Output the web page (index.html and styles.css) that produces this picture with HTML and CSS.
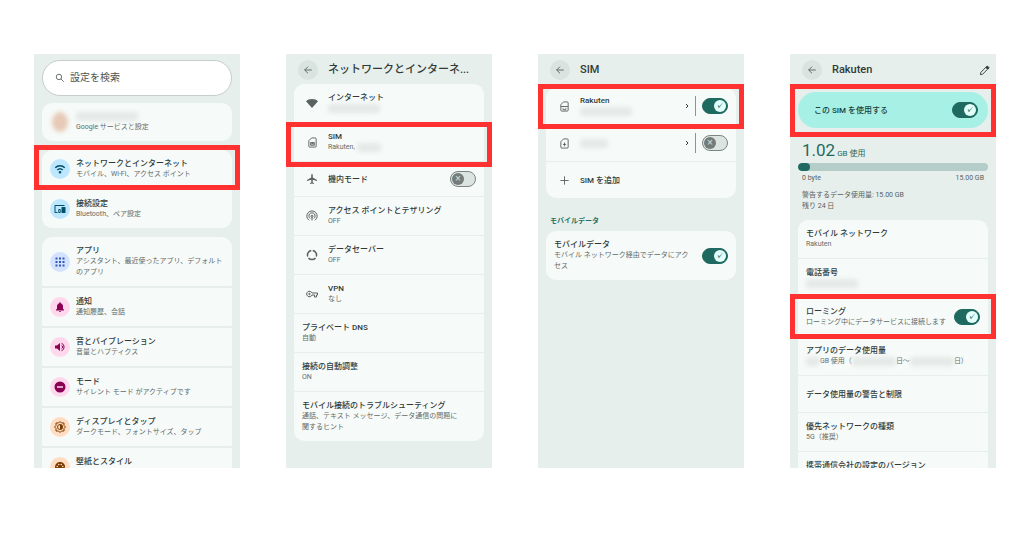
FILE: index.html
```html
<!DOCTYPE html>
<html lang="ja">
<head>
	<meta charset="UTF-8">
	<meta name="viewport" content="width=device-width, initial-scale=1">
	<title>ローミングの設定手順</title>
	<link rel="stylesheet" href="styles.css">
</head>
<body>
	<main class="steps">

		<!-- 設定トップ -->
		<section class="phone">
			<label class="search">
				<svg viewBox="0 0 24 24" class="line"><circle cx="9.500" cy="9.500" r="6.500"/><path d="M14.500 14.500L21 21"/></svg>
				<input type="search" placeholder="設定を検索" aria-label="設定を検索">
			</label>
			<div class="card wide">
				<a class="row" href="#account">
					<span class="icon face"><i></i></span>
					<span class="text"><b><i class="mask name"></i></b><small>Google サービスと設定</small></span>
				</a>
			</div>
			<div class="card wide">
				<a class="row mark" href="#network">
					<span class="icon blue"><svg viewBox="0 0 24 24" class="line bold"><path d="M2.500 9.500a13.500 13.500 0 0 1 19 0M6.500 14a8 8 0 0 1 11 0"/><circle cx="12" cy="18.500" r="1.200"/></svg></span>
					<span class="text"><b>ネットワークとインターネット</b><small>モバイル、Wi-Fi、アクセス ポイント</small></span>
				</a>
				<a class="row" href="#devices">
					<span class="icon blue"><svg viewBox="0 0 24 24"><path d="M3 6h18V4H3c-1.100 0-2 .9-2 2v12c0 1.100.9 2 2 2h4v-2H3V6zm10 6H9v1.780c-.61.550-1 1.330-1 2.220s.39 1.670 1 2.220V20h4v-1.780c.61-.550 1-1.340 1-2.220s-.39-1.670-1-2.220V12zm-2 5.500a1.500 1.500 0 1 1 0-3 1.500 1.500 0 0 1 0 3zM22 8h-6c-.5 0-1 .5-1 1v10c0 .5.5 1 1 1h6c.5 0 1-.5 1-1V9c0-.5-.5-1-1-1z"/></svg></span>
					<span class="text"><b>接続設定</b><small>Bluetooth、ペア設定</small></span>
				</a>
			</div>
			<div class="card wide">
				<a class="row" href="#apps">
					<span class="icon indigo"><svg viewBox="0 0 24 24"><path d="M3 3h4v4H3zM10 3h4v4h-4zM17 3h4v4h-4zM3 10h4v4H3zM10 10h4v4h-4zM17 10h4v4h-4zM3 17h4v4H3zM10 17h4v4h-4zM17 17h4v4h-4z"/></svg></span>
					<span class="text"><b>アプリ</b><small>アシスタント、最近使ったアプリ、デフォルトのアプリ</small></span>
				</a>
				<a class="row" href="#notice">
					<span class="icon pink"><svg viewBox="0 0 24 24"><path d="M12 22a2 2 0 0 0 2-2h-4a2 2 0 0 0 2 2zm6-6v-5c0-3.070-1.640-5.640-4.500-6.320V4a1.500 1.500 0 0 0-3 0v.68C7.630 5.360 6 7.920 6 11v5l-2 1v2h16v-2z"/></svg></span>
					<span class="text"><b>通知</b><small>通知履歴、会話</small></span>
				</a>
				<a class="row" href="#sound">
					<span class="icon pink"><svg viewBox="0 0 24 24"><path d="M2 9v6h4l6 5V4L6 9z"/><path class="wave" d="M15 8.500a4 4 0 0 1 0 7M15 4.500a8 8 0 0 1 0 15"/></svg></span>
					<span class="text"><b>音とバイブレーション</b><small>音量とハプティクス</small></span>
				</a>
				<a class="row" href="#mode">
					<span class="icon pink"><svg viewBox="0 0 24 24"><path fill-rule="evenodd" d="M12 1a11 11 0 1 0 0 22 11 11 0 0 0 0-22zM6 10.500h12v3H6z"/></svg></span>
					<span class="text"><b>モード</b><small>サイレント モード がアクティブです</small></span>
				</a>
				<a class="row" href="#display">
					<span class="icon orange"><svg viewBox="0 0 24 24"><path class="wave" d="M9 4l3-3 3 3h5v5l3 3-3 3v5h-5l-3 3-3-3H4v-5l-3-3 3-3V4z"/><path d="M12 6a6 6 0 0 1 0 12z"/><path class="wave" d="M12 7a5 5 0 0 0 0 10"/></svg></span>
					<span class="text"><b>ディスプレイとタップ</b><small>ダークモード、フォントサイズ、タップ</small></span>
				</a>
				<a class="row" href="#style">
					<span class="icon orange"><svg viewBox="0 0 24 24"><path fill-rule="evenodd" d="M12 2a10 10 0 1 0 0 20c2 0 2-2 1.300-3-.8-1.200 0-3 1.700-3h2a5 5 0 0 0 5-5c0-5-4.500-9-10-9zM6.500 9.500a1.600 1.600 0 1 1 0 3.200 1.600 1.600 0 0 1 0-3.200zm3-4a1.600 1.600 0 1 1 0 3.200 1.600 1.600 0 0 1 0-3.200zm5 0a1.600 1.600 0 1 1 0 3.200 1.600 1.600 0 0 1 0-3.200zm3 4a1.600 1.600 0 1 1 0 3.200 1.600 1.600 0 0 1 0-3.200z"/></svg></span>
					<span class="text"><b>壁紙とスタイル</b><small></small></span>
				</a>
			</div>
		</section>

		<!-- ネットワークとインターネット -->
		<section class="phone">
			<header class="bar">
				<button type="button" class="back" aria-label="戻る"><svg viewBox="0 0 24 24" class="line"><path d="M21 12H4M12 4l-8 8 8 8"/></svg></button>
				<h2>ネットワークとインターネ...</h2>
			</header>
			<div class="card">
				<a class="row" href="#wifi">
					<span class="icon"><svg viewBox="0 0 24 24"><path d="M12 22L0 8.500C3 5.500 7.500 4 12 4s9 1.500 12 4.500z"/></svg></span>
					<span class="text"><b>インターネット</b><small><i class="mask ssid"></i></small></span>
				</a>
				<a class="row mark low" href="#sim">
					<span class="icon"><svg viewBox="0 0 24 24" class="line"><path d="M10 2h8a2 2 0 0 1 2 2v16a2 2 0 0 1-2 2H6a2 2 0 0 1-2-2V8zM8 12h8v6H8zM12 12v3M8 15h8"/></svg></span>
					<span class="text"><b>SIM</b><small>Rakuten, <i class="mask short"></i></small></span>
				</a>
				<label class="row slim">
					<span class="icon"><svg viewBox="0 0 24 24"><path d="M22 16v-2l-8.500-5V3.500a1.500 1.500 0 0 0-3 0V9L2 14v2l8.500-2.500V19L8 20.500V22l4-1 4 1v-1.500L13.500 19v-5.500z"/></svg></span>
					<span class="text"><b>機内モード</b></span>
					<input type="checkbox" class="switch">
				</label>
				<a class="row" href="#tether">
					<span class="icon"><svg viewBox="0 0 24 24" class="line"><path d="M6 20.500a10.300 10.300 0 1 1 12 0M8.500 17a6.200 6.200 0 1 1 7 0"/><circle cx="12" cy="12.500" r="2"/><path d="M12 14v7"/></svg></span>
					<span class="text"><b>アクセス ポイントとテザリング</b><small>OFF</small></span>
				</a>
				<a class="row" href="#saver">
					<span class="icon"><svg viewBox="0 0 24 24" class="line bold"><path d="M13.500 3a9.200 9.200 0 0 1 7 12M19 18a9.200 9.200 0 0 1-14 0M3.500 15a9.200 9.200 0 0 1 7-12"/></svg></span>
					<span class="text"><b>データセーバー</b><small>OFF</small></span>
				</a>
				<a class="row" href="#vpn">
					<span class="icon"><svg viewBox="0 0 24 24" class="line"><path d="M12 10h11v4h-2v4h-4v-4h-5a5.500 5.500 0 1 1 0-4z"/><circle cx="7" cy="12" r="1.500"/></svg></span>
					<span class="text"><b>VPN</b><small>なし</small></span>
				</a>
				<a class="row" href="#dns">
					<span class="text"><b>プライベート DNS</b><small>自動</small></span>
				</a>
				<a class="row" href="#adaptive">
					<span class="text"><b>接続の自動調整</b><small>ON</small></span>
				</a>
				<a class="row" href="#trouble">
					<span class="text narrow"><b>モバイル接続のトラブルシューティング</b><small>通話、テキスト メッセージ、データ通信の問題に関するヒント</small></span>
				</a>
			</div>
		</section>

		<!-- SIM -->
		<section class="phone">
			<header class="bar roomy">
				<button type="button" class="back" aria-label="戻る"><svg viewBox="0 0 24 24" class="line"><path d="M21 12H4M12 4l-8 8 8 8"/></svg></button>
				<h2>SIM</h2>
			</header>
			<div class="card sims">
				<div class="row mark high">
					<span class="icon"><svg viewBox="0 0 24 24" class="line"><path d="M10 2h8a2 2 0 0 1 2 2v16a2 2 0 0 1-2 2H6a2 2 0 0 1-2-2V8zM4 12h16M8 16h2M14 16h2M8 19h8"/></svg></span>
					<a class="text" href="#rakuten"><b>Rakuten</b><small><i class="mask ssid"></i></small></a>
					<svg viewBox="0 0 24 24" class="line chevron"><path d="M8 4l8 8-8 8"/></svg>
					<span class="rule"></span>
					<input type="checkbox" class="switch" aria-label="Rakuten" checked>
				</div>
				<div class="row">
					<span class="icon"><svg viewBox="0 0 24 24" class="line"><path d="M10 2h8a2 2 0 0 1 2 2v16a2 2 0 0 1-2 2H6a2 2 0 0 1-2-2V8zM12 10v8M8.500 14h7"/></svg></span>
					<a class="text" href="#sim2" aria-label="SIM 2"><i class="mask tiny"></i></a>
					<svg viewBox="0 0 24 24" class="line chevron"><path d="M8 4l8 8-8 8"/></svg>
					<span class="rule"></span>
					<input type="checkbox" class="switch" aria-label="SIM 2">
				</div>
				<a class="row" href="#add">
					<span class="icon"><svg viewBox="0 0 24 24" class="line"><path d="M12 3v18M3 12h18"/></svg></span>
					<span class="text"><b>SIM を追加</b></span>
				</a>
			</div>
			<h3>モバイルデータ</h3>
			<div class="card">
				<label class="row">
					<span class="text"><b>モバイルデータ</b><small>モバイル ネットワーク経由でデータにアクセス</small></span>
					<input type="checkbox" class="switch" checked>
				</label>
			</div>
		</section>

		<!-- Rakuten -->
		<section class="phone">
			<header class="bar pill-bar">
				<button type="button" class="back" aria-label="戻る"><svg viewBox="0 0 24 24" class="line"><path d="M21 12H4M12 4l-8 8 8 8"/></svg></button>
				<h2>Rakuten</h2>
				<button type="button" class="edit" aria-label="編集"><svg viewBox="0 0 24 24" class="line"><path d="M3 21l1-5L15 5l4 4L8 20z"/><path class="solid" d="M15 5l3-3 4 4-3 3z"/></svg></button>
			</header>
			<label class="pill mark">
				<span>この SIM を使用する</span>
				<input type="checkbox" class="switch" checked>
			</label>
			<div class="usage">
				<p class="amount"><strong>1.02</strong> GB 使用</p>
				<div class="meter"><i style="width:6.500%"></i></div>
				<p class="range"><span>0 byte</span><span>15.00 GB</span></p>
				<p class="note">警告するデータ使用量: 15.00 GB<br>残り 24 日</p>
			</div>
			<div class="card">
				<a class="row" href="#carrier">
					<span class="text"><b>モバイル ネットワーク</b><small>Rakuten</small></span>
				</a>
				<a class="row" href="#number">
					<span class="text"><b>電話番号</b><small><i class="mask ssid"></i></small></span>
				</a>
				<label class="row mark roam">
					<span class="text"><b>ローミング</b><small>ローミング中にデータサービスに接続します</small></span>
					<input type="checkbox" class="switch" checked>
				</label>
				<a class="row" href="#usage">
					<span class="text"><b>アプリのデータ使用量</b><small class="period"><i class="mask dot"></i>GB 使用（<i class="mask date"></i>日～<i class="mask date"></i>日）</small></span>
				</a>
				<a class="row" href="#limit">
					<span class="text"><b>データ使用量の警告と制限</b></span>
				</a>
				<a class="row" href="#type">
					<span class="text"><b>優先ネットワークの種類</b><small>5G（推奨）</small></span>
				</a>
				<a class="row" href="#version">
					<span class="text"><b>携帯通信会社の設定のバージョン</b><small></small></span>
				</a>
			</div>
		</section>

	</main>
</body>
</html>
```
FILE: styles.css
```css
* {margin:0; padding:0; box-sizing:border-box;}
body {background:#fff; color:#323a38; font-family:Roboto, "Noto Sans CJK JP", sans-serif; font-size:8px; line-height:11px;}
a {color:inherit; text-decoration:none;}
i {font-style:normal;}
button {border:0; background:none; color:inherit; cursor:pointer;}
svg {display:block; width:10px; height:10px; fill:currentColor; flex:none;}
svg.line {fill:none; stroke:currentColor; stroke-width:2;}
svg.bold {stroke-width:3;}
.wave {fill:none; stroke:currentColor; stroke-width:2;}
.solid {fill:currentColor;}

.steps {height:100vh; padding:54px 28px 70px 34px; display:grid; grid-template-columns:repeat(4, 1fr); gap:46px;}
.phone {background:#e6efec; padding:0 8px; overflow:hidden; min-width:0;}

/* 検索 */
.search {display:flex; align-items:center; gap:5px; height:36px; margin:6px 0 7px; padding:0 12px; background:#fff; border:1px solid #c6cdcb; border-radius:18px; color:#4c5553;}
.search input {flex:1; min-width:0; border:0; outline:0; background:none; font:10px/16px Roboto, "Noto Sans CJK JP", sans-serif;}
.search input::placeholder {color:#4c5553; opacity:1;}

/* ヘッダー */
.bar {display:flex; align-items:center; gap:10px; height:30px; padding:2px 0 0 4px;}
.bar.roomy {height:34px; padding-bottom:4px;}
.bar.pill-bar {height:38px; padding-bottom:8px;}
.back {display:flex; align-items:center; justify-content:center; width:20px; height:20px; border-radius:50%; background:#d9e4e1; color:#4c5553; flex:none;}
.bar h2 {flex:1; font-size:11px; line-height:16px; font-weight:500; white-space:nowrap;}
.edit {width:16px; height:16px; display:flex; align-items:center; justify-content:center; margin-right:-4px;}
.edit svg {width:11px; height:11px;}

/* リスト */
.card {display:grid; gap:1px; border-radius:10px;}
.card.wide {gap:2px; margin-bottom:9px;}
.row {display:flex; align-items:center; position:relative; min-height:36px; padding:8px; background:#f6faf8; border-radius:1px;}
.row:first-child {border-top-left-radius:10px; border-top-right-radius:10px;}
.row:last-child {border-bottom-left-radius:10px; border-bottom-right-radius:10px;}
.row.slim {min-height:34px; padding:6px 8px;}
.sims .row {height:36px; padding:7px 8px;}
.icon {display:flex; align-items:center; justify-content:center; width:20px; height:20px; margin-right:6px; border-radius:50%; color:#59625f; flex:none;}
.icon svg {width:12px; height:12px;}
.sims .icon svg, .mark.low .icon svg {width:11px; height:11px;}
.text {flex:1; min-width:0;}
.text b {display:block; min-height:11px; font-weight:500;}
.text small {display:block; min-height:11px; font-size:7px; color:#626b69;}
.text.narrow {padding-right:12px;}
.blue {background:#bce7ff; color:#00506a;}
.indigo {background:#d2e2ff; color:#3159b5;}
.pink {background:#ffd8ee; color:#8c0054;}
.orange {background:#ffdcc2; color:#7b3c00;}
.face i {width:16px; height:20px; border-radius:50%; background:#e6c9b6; filter:blur(2px);}

/* 伏せ字 */
.mask {display:inline-block; vertical-align:middle; height:9px; border-radius:4px; background:#e4e9e7; filter:blur(2px);}
.mask.name {width:62px;}
.mask.ssid {width:52px;}
.mask.short {width:24px;}
.mask.tiny {width:28px;}
.mask.dot {width:14px;}
.mask.date {width:44px;}
.text .period {display:flex; align-items:center; white-space:nowrap;}

/* スイッチ */
.switch {appearance:none; display:block; position:relative; width:26px; height:16px; border:1px solid #7b8583; border-radius:8px; background:#dbe4e1; flex:none; cursor:pointer;}
.switch::before {content:"×"; position:absolute; left:1px; top:1px; width:12px; height:12px; border-radius:50%; background:#737c7a; color:#dbe4e1; font-size:10px; line-height:12px; text-align:center;}
.switch:checked {background:#1e6a61; border-color:#1e6a61;}
.switch:checked::before {content:"✓"; left:11px; background:#e2fffa; color:#1e6a61; font-size:8px;}
.text + .switch {margin-left:4px;}
.chevron {width:6px; height:6px;}
.chevron path {stroke-width:4;}
.rule {width:1px; height:20px; margin:0 6px 0 5px; background:#8b9492;}

/* 赤枠 */
.mark {position:relative;}
.mark::after {content:""; position:absolute; z-index:2; top:-5px; bottom:-2px; left:-8px; right:-8px; border:5px solid #ff3131; pointer-events:none;}
.mark.low::after {top:-1px; bottom:-6px;}
.mark.high::after {top:-4px; bottom:-5px;}
.mark.roam::after {top:-4px; bottom:-3px;}
.pill.mark::after {top:-8px; bottom:-9px;}

h3 {margin:18px 0 4px 4px; font-size:7px; line-height:11px; font-weight:700; color:#1e7267;}
h3 + .card .text {padding-right:8px;}

.pill {display:flex; align-items:center; justify-content:space-between; height:36px; padding:0 10px 0 16px; border-radius:18px; background:#a7f0e6; color:#17423d; font-weight:500;}

/* データ使用量 */
.usage {padding-top:14px; font-size:7px; color:#59625f;}
.amount {height:16px; padding-left:4px; font-size:8px; line-height:16px; color:#1e6a61;}
.amount strong {font-size:17px; font-weight:400;}
.meter {height:8px; margin-top:5px; border-radius:4px; background:#b4cdc9; overflow:hidden;}
.meter i {display:block; height:8px; border-radius:4px; background:#1e6a61;}
.range {display:flex; justify-content:space-between; padding:2px 4px 0;}
.note {padding:6px 4px 8px;}
```
